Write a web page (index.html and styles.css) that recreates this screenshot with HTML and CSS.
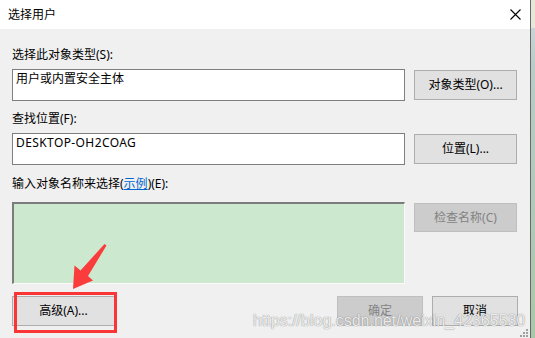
FILE: index.html
```html
<!DOCTYPE html>
<html lang="zh-CN">
<head>
<meta charset="utf-8">
<title>选择用户</title>
<link rel="stylesheet" href="styles.css">
</head>
<body>
<div class="screen">
  <div class="dialog">
    <div class="titlebar">
      <span class="title">选择用户</span>
      <svg class="close" width="11" height="11" viewBox="0 0 11 11"><path d="M0.5 0.5L10.5 10.5M10.5 0.5L0.5 10.5" stroke="#000" stroke-width="1.1" fill="none"/></svg>
    </div>
    <div class="content">
      <div class="label l1">选择此对象类型(S):</div>
      <div class="row">
        <div class="field">用户或内置安全主体</div>
        <div class="btn">对象类型(O)...</div>
      </div>
      <div class="label l2">查找位置(F):</div>
      <div class="row">
        <div class="field latin">DESKTOP-OH2COAG</div>
        <div class="btn">位置(L)...</div>
      </div>
      <div class="label l3">输入对象名称来选择(<span class="link">示例</span>)(E):</div>
      <div class="row top">
        <div class="names"></div>
        <div class="btn disabled">检查名称(C)</div>
      </div>
      <div class="footer">
        <div class="btn adv">高级(A)...</div>
        <div class="spacer"></div>
        <div class="btn small disabled">确定</div>
        <div class="btn small">取消</div>
      </div>
    </div>
    <div class="highlight"></div>
    <svg class="arrow" width="535" height="338" viewBox="0 0 535 338"><polygon points="104.5,244 106.5,245.5 88,276 93,280.5 73,289 74.5,265.5 80.5,270.5" fill="#fa3c3c"/></svg>
    <div class="watermark">https://blog.csdn.net/weixin_42365530</div>
    <svg class="grip" width="9" height="9" viewBox="0 0 9 9"><g fill="#a0a0a0"><rect x="6" y="0" width="2" height="2"/><rect x="3" y="3" width="2" height="2"/><rect x="6" y="3" width="2" height="2"/><rect x="0" y="6" width="2" height="2"/><rect x="3" y="6" width="2" height="2"/><rect x="6" y="6" width="2" height="2"/></g></svg>
  </div>
  <div class="edge"></div>
</div>
</body>
</html>
```
FILE: styles.css
```css
html, body {
  margin: 0;
  padding: 0;
}
body {
  width: 535px;
  height: 338px;
  overflow: hidden;
  font-family: "Noto Sans", "Noto Sans CJK SC", sans-serif;
  font-size: 12px;
  color: #000;
}
.screen {
  display: flex;
  width: 535px;
  height: 338px;
}
.dialog {
  position: relative;
  width: 530px;
  height: 338px;
  background: #f0f0f0;
  display: flex;
  flex-direction: column;
}
.edge {
  width: 5px;
  height: 338px;
  border-left: 1px solid #666a66;
  box-sizing: border-box;
  background: linear-gradient(#e9e6da 0, #e9e6da 28px, #c9d3d6 28px, #b9ccc8 70px, #a9c8a9 100%);
}
.titlebar {
  height: 29px;
  background: #fff;
  display: flex;
  align-items: center;
  justify-content: space-between;
  padding: 0 9px 0 8px;
}
.title {
  line-height: 16px;
  margin-top: 1px;
}
.close {
  margin-top: -1px;
}
.content {
  padding: 0 12px;
  display: flex;
  flex-direction: column;
}
.label {
  line-height: 16px;
  height: 16px;
}
.l1 { margin-top: 18px; margin-bottom: 6px; }
.l2 { margin-top: 10px; margin-bottom: 6px; }
.l3 { margin-top: 11px; margin-bottom: 10px; }
.link {
  color: #0066cc;
  text-decoration: underline;
}
.row {
  display: flex;
  align-items: center;
  gap: 9px;
}
.row.top {
  align-items: flex-start;
}
.field {
  width: 393px;
  height: 32px;
  box-sizing: border-box;
  border: 1px solid #7f7f7f;
  background: #fff;
  padding: 1px 3px;
  line-height: 16px;
}
.field.latin {
  letter-spacing: 0.4px;
}
.names {
  width: 393px;
  height: 82px;
  box-sizing: border-box;
  background: #cce8cf;
  border-style: solid;
  border-width: 2px 1px 1px 2px;
  border-color: #7c7c7c #fafafa #fafafa #7c7c7c;
}
.btn {
  width: 103px;
  height: 30px;
  box-sizing: border-box;
  border: 1px solid #adadad;
  background: #e1e1e1;
  display: flex;
  align-items: center;
  justify-content: center;
  line-height: 16px;
}
.row.top .btn {
  margin-top: 1px;
  height: 29px;
}
.btn.disabled {
  background: #cccccc;
  border-color: #bfbfbf;
  color: #838383;
}
.footer {
  display: flex;
  align-items: center;
  margin-top: 12px;
}
.btn.adv {
  width: 103px;
}
.spacer {
  flex: 1;
}
.btn.small {
  width: 86px;
  margin-left: 9px;
}
.highlight {
  position: absolute;
  left: 14px;
  top: 292px;
  width: 103px;
  height: 41px;
  box-sizing: border-box;
  border: 3px solid #fa3535;
}
.arrow {
  position: absolute;
  left: 0;
  top: 0;
}
.watermark {
  position: absolute;
  left: 253px;
  top: 311px;
  font-family: "Liberation Sans", Arial, sans-serif;
  font-size: 16px;
  line-height: 20px;
  color: rgba(255, 255, 255, 0.85);
  text-shadow: 0 0 1px rgba(90, 90, 90, 0.55), 0 0 1px rgba(90, 90, 90, 0.45);
  white-space: nowrap;
}
.grip {
  position: absolute;
  left: 520px;
  top: 329px;
}
```
